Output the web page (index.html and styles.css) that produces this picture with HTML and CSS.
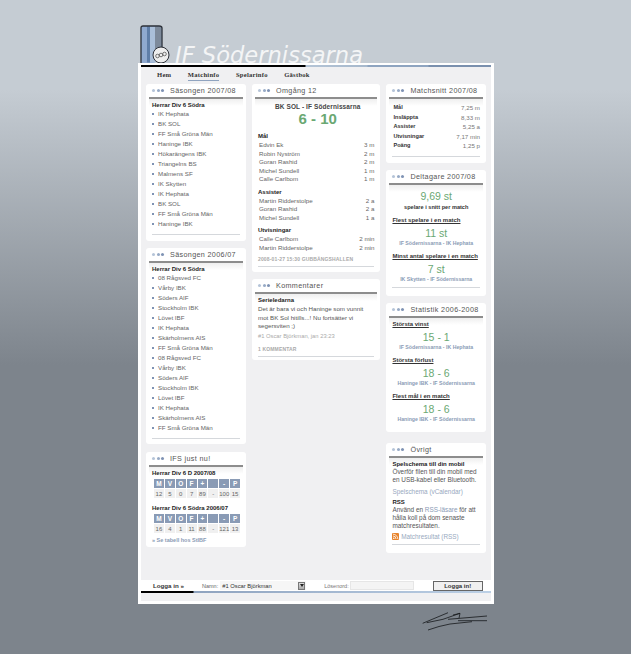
FILE: index.html
```html
<!DOCTYPE html>
<html lang="sv">
<head>
    <meta charset="UTF-8">
    <title>IF Södernissarna</title>
    <link rel="stylesheet" href="styles.css">
</head>
<body>
    <div class="header">
        <svg class="logo" width="32" height="40" viewBox="0 0 32 40">
            <path d="M1 38 L1 3 Q1 1 3 1 L19 1 Q22 1 22 3 L22 30 L14 38 Z" fill="#8fa9cf"/>
            <rect x="7" y="1.5" width="3" height="36" fill="#5f7ea8"/>
            <rect x="10" y="1.5" width="5" height="36" fill="#aabfd9"/>
            <rect x="15" y="1.5" width="6.5" height="30" fill="#7d8a9b"/>
            <path d="M1 38 L1 3 Q1 1 3 1 L19 1 Q22 1 22 3 L22 24" fill="none" stroke="#2c3038" stroke-width="1.3"/>
            <circle cx="21" cy="30" r="8" fill="#eeeeee" stroke="#2c3038" stroke-width="1"/>
            <circle cx="17.5" cy="31" r="1.8" fill="none" stroke="#555" stroke-width="0.8"/>
            <circle cx="21" cy="30" r="1.8" fill="none" stroke="#555" stroke-width="0.8"/>
            <circle cx="24.5" cy="29" r="1.8" fill="none" stroke="#555" stroke-width="0.8"/>
        </svg>
        <h1 class="site-name">IF Södernissarna</h1>
    </div>

    <div class="wrapper">
        <div class="topbar"></div>
        <div class="nav">
            <a href="#">Hem</a>
            <a href="#" class="active">Matchinfo</a>
            <a href="#">Spelarinfo</a>
            <a href="#">Gästbok</a>
        </div>

        <div class="columns">
            <div class="col col-side">
                <div class="card card-s1">
                    <h2 class="card-title"><span class="dots"><i></i><i></i><i></i></span>Säsongen 2007/08</h2>
                    <div class="card-body">
                        <h3>Herrar Div 6 Södra</h3>
                        <ul class="teams">
                            <li>IK Hephata</li>
                            <li>BK SOL</li>
                            <li>FF Små Gröna Män</li>
                            <li>Haninge IBK</li>
                            <li>Hökarängens IBK</li>
                            <li>Triangelns BS</li>
                            <li>Malmens SF</li>
                            <li>IK Skytten</li>
                            <li>IK Hephata</li>
                            <li>BK SOL</li>
                            <li>FF Små Gröna Män</li>
                            <li>Haninge IBK</li>
                        </ul>
                        <div class="end-line"></div>
                    </div>
                </div>

                <div class="card card-s2">
                    <h2 class="card-title"><span class="dots"><i></i><i></i><i></i></span>Säsongen 2006/07</h2>
                    <div class="card-body">
                        <h3>Herrar Div 6 Södra</h3>
                        <ul class="teams">
                            <li>08 Rågsved FC</li>
                            <li>Vårby IBK</li>
                            <li>Söders AIF</li>
                            <li>Stockholm IBK</li>
                            <li>Lövet IBF</li>
                            <li>IK Hephata</li>
                            <li>Skärholmens AIS</li>
                            <li>FF Små Gröna Män</li>
                            <li>08 Rågsved FC</li>
                            <li>Vårby IBK</li>
                            <li>Söders AIF</li>
                            <li>Stockholm IBK</li>
                            <li>Lövet IBF</li>
                            <li>IK Hephata</li>
                            <li>Skärholmens AIS</li>
                            <li>FF Små Gröna Män</li>
                        </ul>
                        <div class="end-line"></div>
                    </div>
                </div>

                <div class="card card-s3">
                    <h2 class="card-title"><span class="dots"><i></i><i></i><i></i></span>IFS just nu!</h2>
                    <div class="card-body">
                        <h3>Herrar Div 6 D 2007/08</h3>
                        <table class="standing">
                            <tr><th>M</th><th>V</th><th>O</th><th>F</th><th>+</th><th></th><th>-</th><th>P</th></tr>
                            <tr><td>12</td><td>5</td><td>0</td><td>7</td><td>89</td><td>-</td><td>100</td><td>15</td></tr>
                        </table>
                        <h3 class="second">Herrar Div 6 Södra 2006/07</h3>
                        <table class="standing">
                            <tr><th>M</th><th>V</th><th>O</th><th>F</th><th>+</th><th></th><th>-</th><th>P</th></tr>
                            <tr><td>16</td><td>4</td><td>1</td><td>11</td><td>88</td><td>-</td><td>121</td><td>13</td></tr>
                        </table>
                        <a href="#" class="table-link">» Se tabell hos StIBF</a>
                        <div class="end-line tight"></div>
                    </div>
                </div>
            </div>

            <div class="col col-main">
                <div class="card card-m1">
                    <h2 class="card-title"><span class="dots"><i></i><i></i><i></i></span>Omgång 12</h2>
                    <div class="card-body">
                        <div class="match-name">BK SOL - IF Södernissarna</div>
                        <div class="score">6 - 10</div>

                        <h3 class="stat-head">Mål</h3>
                        <div class="stat"><span>Edvin Ek</span><span>3 m</span></div>
                        <div class="stat"><span>Robin Nyström</span><span>2 m</span></div>
                        <div class="stat"><span>Goran Rashid</span><span>2 m</span></div>
                        <div class="stat"><span>Michel Sundell</span><span>1 m</span></div>
                        <div class="stat"><span>Calle Carlbom</span><span>1 m</span></div>

                        <h3 class="stat-head">Assister</h3>
                        <div class="stat"><span>Martin Ridderstolpe</span><span>2 a</span></div>
                        <div class="stat"><span>Goran Rashid</span><span>2 a</span></div>
                        <div class="stat"><span>Michel Sundell</span><span>1 a</span></div>

                        <h3 class="stat-head">Utvisningar</h3>
                        <div class="stat"><span>Calle Carlbom</span><span>2 min</span></div>
                        <div class="stat"><span>Martin Ridderstolpe</span><span>2 min</span></div>

                        <div class="meta">2008-01-27 15:30 GUBBÄNGSHALLEN</div>
                        <div class="end-line tight"></div>
                    </div>
                </div>

                <div class="card card-m2">
                    <h2 class="card-title"><span class="dots"><i></i><i></i><i></i></span>Kommentarer</h2>
                    <div class="card-body">
                        <h3>Serieledarna</h3>
                        <p class="comment wide">Det är bara vi och Haninge som vunnit mot BK Sol hitills...! Nu fortsätter vi segersviten ;)</p>
                        <div class="comment-by">#1 Oscar Björkman, jan 23:23</div>
                        <div class="meta count">1 KOMMENTAR</div>
                        <div class="end-line tight"></div>
                    </div>
                </div>
            </div>

            <div class="col col-side">
                <div class="card card-r1">
                    <h2 class="card-title"><span class="dots"><i></i><i></i><i></i></span>Matchsnitt 2007/08</h2>
                    <div class="card-body">
                        <div class="avgs">
                            <div class="avg"><b>Mål</b><span>7,25 m</span></div>
                            <div class="avg"><b>Insläppta</b><span>8,33 m</span></div>
                            <div class="avg"><b>Assister</b><span>5,25 a</span></div>
                            <div class="avg"><b>Utvisningar</b><span>7,17 min</span></div>
                            <div class="avg"><b>Poäng</b><span>1,25 p</span></div>
                        </div>
                        <div class="end-line"></div>
                    </div>
                </div>

                <div class="card card-r2">
                    <h2 class="card-title"><span class="dots"><i></i><i></i><i></i></span>Deltagare 2007/08</h2>
                    <div class="card-body center">
                        <div class="big-num first">9,69 st</div>
                        <div class="big-note">spelare i snitt per match</div>
                        <div class="sub-link">Flest spelare i en match</div>
                        <div class="big-num">11 st</div>
                        <div class="teams-line">IF Södernissarna - IK Hephata</div>
                        <div class="sub-link">Minst antal spelare i en match</div>
                        <div class="big-num">7 st</div>
                        <div class="teams-line">IK Skytten - IF Södernissarna</div>
                        <div class="end-line"></div>
                    </div>
                </div>

                <div class="card card-r3">
                    <h2 class="card-title"><span class="dots"><i></i><i></i><i></i></span>Statistik 2006-2008</h2>
                    <div class="card-body center">
                        <div class="sub-link lead">Största vinst</div>
                        <div class="big-num">15 - 1</div>
                        <div class="teams-line">IF Södernissarna - IK Hephata</div>
                        <div class="sub-link">Största förlust</div>
                        <div class="big-num">18 - 6</div>
                        <div class="teams-line">Haninge IBK - IF Södernissarna</div>
                        <div class="sub-link">Flest mål i en match</div>
                        <div class="big-num">18 - 6</div>
                        <div class="teams-line">Haninge IBK - IF Södernissarna</div>
                    </div>
                </div>

                <div class="card card-r4">
                    <h2 class="card-title"><span class="dots"><i></i><i></i><i></i></span>Övrigt</h2>
                    <div class="card-body">
                        <h3 class="info-head">Spelschema till din mobil</h3>
                        <p class="comment">Överför filen till din mobil med en USB-kabel eller Bluetooth.</p>
                        <a href="#" class="plain-link">Spelschema (vCalendar)</a>
                        <h3 class="rss-head">RSS</h3>
                        <p class="comment rss-text">Använd en <a href="#">RSS-läsare</a> för att hålla koll på dom senaste matchresultaten.</p>
                        <a href="#" class="plain-link rss-link">
                            <svg width="7" height="7" viewBox="0 0 7 7"><rect width="7" height="7" rx="1" fill="#e8842c"/><circle cx="1.8" cy="5.2" r="0.8" fill="#fff"/><path d="M1 3 A3 3 0 0 1 4 6 M1 1.2 A4.8 4.8 0 0 1 5.8 6" fill="none" stroke="#fff" stroke-width="0.8"/></svg>
                            Matchresultat (RSS)
                        </a>
                        <div class="end-line tight"></div>
                    </div>
                </div>
            </div>
        </div>

        <form class="login">
            <span class="login-label">Logga in »</span>
            <label class="name-label">Namn:</label>
            <div class="fake-select"><span>#1 Oscar Björkman</span><i class="arrow"></i></div>
            <label class="pass-label">Lösenord:</label>
            <div class="fake-input"></div>
            <button type="button" class="login-btn">Logga in!</button>
        </form>
        <div class="bottombar"></div>
        <div class="bottomfill"></div>
    </div>

    <svg class="signature" width="66" height="22" viewBox="0 0 66 22">
        <path d="M1.7 11.3 L27 0.7 M5.7 10.7 L22 7.3 L39 1.3 M32 3 L39 1.3 L38 6.3 M27 7.3 L66 4 M37 8.7 L66 8.7 M7 18 Q18 14 29 12 L51 9.7" fill="none" stroke="#15181b" stroke-width="0.8"/>
    </svg>
</body>
</html>
```
FILE: styles.css
```css
* { box-sizing: border-box; }
body { margin: 0; height: 654px; overflow: hidden; background: linear-gradient(to bottom, #c5ccd3 0, #c5ccd3 90px, #7d848c 365px, #7d848c 100%); font-family: "Liberation Sans", Arial, sans-serif; font-size: 6.2px; color: #444; }
a { color: inherit; text-decoration: none; }

.header { display: flex; align-items: flex-end; height: 63px; margin-left: 140px; }
.logo { display: block; margin-bottom: -2px; flex: none; }
.site-name { margin: 0 0 -5px 3px; font-family: "DejaVu Sans", sans-serif; font-size: 22.6px; line-height: 26px; font-weight: normal; font-style: italic; color: #f4f5f6; white-space: nowrap; }

.wrapper { position: relative; width: 356px; height: 541px; margin-left: 138px; padding: 2px 3px 3px; background: #fff; }
.topbar { height: 2px; background: linear-gradient(to right, #000 0, #000 164px, #b4c4d6 165px, #a6b8cc 226px, #8ea4c0 227px, #8ea4c0 287px, #7a90ae 288px, #7a90ae 100%); }
.nav { display: flex; gap: 16.5px; height: 17px; padding: 3px 0 0 16px; background: #f0f0f2; font-family: "Liberation Serif", serif; font-size: 6.6px; font-weight: bold; letter-spacing: 0.25px; color: #333; }
.nav a { height: 11px; line-height: 9px; }
.nav a.active { border-bottom: 1px solid #8fa3bf; }

.columns { display: flex; gap: 6px; height: 496px; padding: 0 5px; background: #f0f0f2; }
.col { display: flex; flex-direction: column; }
.col-side { width: 100px; }
.col-main { width: 129px; }
.card { background: #fff; border-radius: 3px; overflow: hidden; }

.card-title { display: flex; align-items: center; height: 15px; margin: 0 3px; border-bottom: 2px solid #8d8d8d; font-size: 7.2px; font-weight: normal; letter-spacing: 0.35px; color: #555; white-space: nowrap; }
.dots { display: flex; gap: 1.5px; margin: 0 6px 0 3px; }
.dots i { display: block; width: 3px; height: 3px; border-radius: 50%; background: #7f93b4; }
.dots i:first-child { background: #b5c4d8; }
.dots i:nth-child(2) { background: #98abc6; }

.card-body { margin: 0 3px; padding: 2px 3px 0; background: linear-gradient(to bottom, #efefef 0, #fff 7px); }
.card-body h3 { margin: 0; font-size: 6px; line-height: 8px; font-weight: bold; color: #222; }
.end-line { height: 1px; margin-top: 5px; background: #d5d8dc; }
.end-line.tight { margin-top: 3px; }

.card-s1 { height: 157px; }
.card-s2 { height: 196px; margin-top: 7px; }
.card-s3 { height: 95px; margin-top: 8px; }
.card-m1 { height: 188px; }
.card-m2 { height: 81px; margin-top: 7px; }
.card-r1 { height: 79px; }
.card-r2 { height: 126px; margin-top: 7px; }
.card-r3 { height: 129px; margin-top: 7px; }
.card-r4 { height: 110px; margin-top: 11px; }

.teams { margin: 0; padding: 0; list-style: none; }
.teams li { position: relative; height: 10px; padding-left: 6px; line-height: 10px; color: #666; white-space: nowrap; }
.teams li::before { content: ""; position: absolute; left: 0; top: 4px; width: 2px; height: 2px; background: #7f93b4; }

.standing { width: 88px; margin: 1px 0 0 1px; border-collapse: collapse; table-layout: fixed; }
.standing th { height: 10px; padding: 0; border: 1px solid #fff; background: #8a9bb5; color: #fff; font-size: 6.5px; line-height: 8px; }
.standing td { height: 10px; padding: 0; border: 1px solid #fff; background: #f0f0f0; color: #666; font-size: 6px; line-height: 8px; text-align: center; }
.card-body .second { margin-top: 5px; }
.table-link { display: block; margin-top: 2px; font-size: 5.5px; line-height: 8px; font-weight: bold; color: #8a9bb5; }

.match-name { padding-left: 3px; font-size: 6.5px; line-height: 11px; font-weight: bold; letter-spacing: 0.1px; color: #444; text-align: center; }
.score { padding-left: 3px; font-size: 15px; line-height: 14px; font-weight: bold; color: #6aa873; text-align: center; }
.card-body .stat-head { margin-top: 5px; line-height: 8px; }
.card-body .stat-head:first-of-type { margin-top: 6px; }
.stat { display: flex; justify-content: space-between; height: 8.5px; padding: 0 0 0 1px; line-height: 9px; color: #666; }
.stat + .stat-head { margin-top: 5px; }
.meta { margin-top: 5px; font-size: 5px; line-height: 7px; font-weight: bold; letter-spacing: 0.15px; color: #aaa; white-space: nowrap; }
.meta.count { margin-top: 6px; }
.comment { margin: 0; font-size: 6.4px; line-height: 7.5px; color: #555; }
.comment.wide { max-width: 112px; margin-top: 1px; font-size: 6.2px; line-height: 8.5px; }
.comment a { color: #8a9bb5; }
.comment-by { margin-top: 1px; font-size: 5.8px; line-height: 8px; color: #aaa; }

.avgs { padding-top: 2px; }
.avg { display: flex; justify-content: space-between; height: 9.5px; padding: 0 0 0 1px; line-height: 9px; color: #777; }
.avg b { font-size: 5.6px; color: #333; }
.center { text-align: center; }
.big-num { font-size: 10.5px; line-height: 14px; color: #6aa873; }
.big-num.first { margin-top: 2px; }
.big-note { margin-top: 1px; font-size: 5.6px; line-height: 6px; font-weight: bold; color: #333; }
.sub-link { margin-top: 4px; font-size: 6px; line-height: 12px; font-weight: bold; color: #333; text-align: left; text-decoration: underline; white-space: nowrap; }
.sub-link.lead { margin-top: -2px; }
.teams-line { font-size: 5.2px; line-height: 6px; font-weight: bold; color: #8a9bb5; white-space: nowrap; }

.card-body .info-head { line-height: 8px; }
.plain-link { display: block; margin-top: 5px; font-size: 6.4px; line-height: 8px; color: #98a9c0; }
.card-body .rss-head { margin-top: 2px; }
.comment.rss-text { line-height: 8px; }
.plain-link.rss-link { margin-top: 3px; }
.rss-link svg { vertical-align: -1px; }

.login { display: flex; align-items: center; height: 11px; }
.login-label { width: 50px; padding-left: 12px; font-size: 6.2px; font-weight: bold; color: #333; white-space: nowrap; }
.name-label { margin-left: 11px; font-size: 5.5px; color: #666; white-space: nowrap; }
.fake-select { display: flex; justify-content: space-between; align-items: center; width: 86px; height: 9px; margin-left: 2px; padding: 0 1px 0 2px; background: #f6f6f6; font-size: 5.8px; color: #333; }
.arrow { display: flex; align-items: center; justify-content: center; width: 7px; height: 8px; border: 1px solid #777; background: linear-gradient(to bottom, #ddd, #aaa); }
.arrow::after { content: ""; border-left: 2px solid transparent; border-right: 2px solid transparent; border-top: 3px solid #222; }
.pass-label { margin-left: 18px; font-size: 5.5px; color: #777; white-space: nowrap; }
.fake-input { width: 64px; height: 9px; margin-left: 1px; background: #f4f4f4; border: 1px solid #e6e6e6; }
.login-btn { width: 50px; height: 10px; margin-left: 19px; padding: 0; border: 1px solid #666; background: #f0f0f0; font-family: inherit; font-size: 6px; font-weight: bold; color: #333; }
.bottombar { height: 2px; background: linear-gradient(to right, #000 0, #000 52px, #8fa3bf 53px, #bcd0e6 100%); }
.bottomfill { height: 8px; background: #f0f0f2; }

.signature { display: block; margin: 8px 0 0 421px; }
```
